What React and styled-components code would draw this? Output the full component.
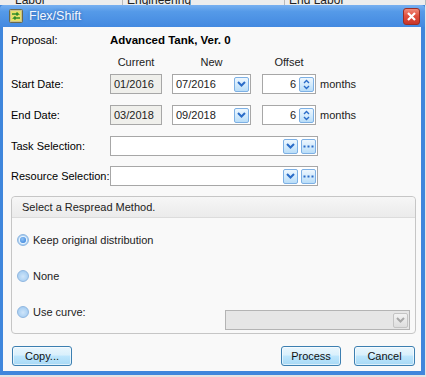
import React from 'react'
import styled, { createGlobalStyle } from 'styled-components'

const GlobalStyle = createGlobalStyle`
html, body {
  margin: 0;
  padding: 0;
}
body {
  width: 426px;
  height: 377px;
  overflow: hidden;
  background: #e4e4e4;
  font-family: "Liberation Sans", Arial, sans-serif;
  font-size: 11px;
  color: #000;
}
`

const Sheet = styled.div`
display: flex;
height: 5px;
overflow: hidden;
background: #ededed;
`

const SheetCell = styled.div`
width: ${p => p.$w}px;
padding-left: ${p => p.$pad}px;
box-sizing: border-box;
border-right: 1px solid #b9b9b9;
font-size: 12px;
line-height: 0px;
color: #222;
white-space: nowrap;
overflow: hidden;
`

const Window = styled.div`
width: 425px;
box-sizing: border-box;
background: #3f86dc;
padding: 0 4px 4px 3px;
display: flex;
flex-direction: column;
`

const TitleBar = styled.div`
height: 22px;
margin: 0 -4px 0 -3px;
padding: 0 5px 0 9px;
display: flex;
align-items: center;
gap: 6px;
background: linear-gradient(#78b0f0 0%, #559ae8 30%, #4389e0 100%);
border-radius: 4px 4px 0 0;
`

const TitleText = styled.div`
flex: 1;
color: #f4f8ff;
font-size: 12.5px;
text-shadow: 0 0 3px rgba(20, 60, 130, 0.6);
`

const CloseButton = styled.div`
width: 15px;
height: 15px;
border: 1px solid #9b2e25;
border-radius: 3px;
background: linear-gradient(#f08a7a 0%, #e1513f 45%, #c8352a 100%);
display: flex;
align-items: center;
justify-content: center;
`

const Body = styled.div`
height: 344px;
box-sizing: border-box;
background: #f9f9f9;
padding: 3px 5px 0 8px;
display: flex;
flex-direction: column;
`

const Row = styled.div`
display: flex;
align-items: center;
height: 20px;
margin-top: ${p => p.$top || 0}px;
`

const Label = styled.div`
width: 99px;
flex-shrink: 0;
white-space: nowrap;
`

const Bold = styled.div`
font-weight: bold;
font-size: 11.5px;
`

const Head = styled.div`
width: ${p => p.$w}px;
margin-right: ${p => p.$mr || 0}px;
text-align: center;
color: #222;
`

const Field = styled.div`
width: ${p => p.$w}px;
height: 20px;
box-sizing: border-box;
margin-right: ${p => p.$mr || 0}px;
border: 1px solid ${p => (p.$disabled ? '#b4b4b4' : '#a7a7a7')};
background: ${p => (p.$readonly ? '#efefeb' : p.$disabled ? '#e6e6e6' : '#fff')};
display: flex;
align-items: center;
gap: 3px;
padding: 0 1px 0 3px;
color: #222;
font-size: 11px;
`

const FieldText = styled.div`
flex: 1;
text-align: ${p => p.$align || 'left'};
padding-right: ${p => p.$pr || 0}px;
`

const MiniButton = styled.div`
width: 15px;
height: 15px;
box-sizing: border-box;
border: 1px solid ${p => (p.$disabled ? '#c4c4c4' : '#7db0e4')};
border-radius: 2px;
background: ${p =>
  p.$disabled
    ? 'linear-gradient(#f2f2f2, #dedede)'
    : 'linear-gradient(#eef7fe 0%, #d4ebfc 50%, #b9ddf8 100%)'};
display: flex;
align-items: center;
justify-content: center;
`

const Units = styled.div`
margin-left: 4px;
color: #222;
`

const Group = styled.div`
margin-top: 10px;
height: 138px;
box-sizing: border-box;
border: 1px solid #c6c6c6;
border-radius: 4px;
display: flex;
flex-direction: column;
`

const GroupHead = styled.div`
height: 20px;
flex-shrink: 0;
padding-left: 10px;
display: flex;
align-items: center;
background: linear-gradient(#f6f6f6, #ebebeb);
border-bottom: 1px solid #dcdcdc;
border-radius: 4px 4px 0 0;
color: #222;
`

const GroupBody = styled.div`
padding: 12px 5px 0 5px;
display: flex;
flex-direction: column;
gap: 16px;
`

const RadioRow = styled.div`
display: flex;
align-items: flex-start;
`

const RadioLabel = styled.div`
height: 20px;
display: flex;
align-items: center;
gap: 4px;
color: #222;
`

const Radio = styled.span`
width: 12px;
height: 12px;
box-sizing: border-box;
border-radius: 50%;
border: 1px solid #8fb6e0;
background: radial-gradient(circle at 50% 55%, #cfe5fa 0%, #a9cff2 70%, #9cc6ee 100%);
display: flex;
align-items: center;
justify-content: center;

&::after {
  content: '';
  display: ${p => (p.$checked ? 'block' : 'none')};
  width: 6px;
  height: 6px;
  border-radius: 50%;
  background: radial-gradient(circle at 40% 35%, #8fc2f5, #2f7bd8);
  box-shadow: 0 0 0 1px #eaf4fd;
}
`

const CurveField = styled(Field)`
margin-left: auto;
margin-top: 8px;
`

const ButtonBar = styled.div`
display: flex;
margin-top: 12px;
padding: 0 1px;
gap: 13px;
`

const Button = styled.button`
width: ${p => p.$w || 60}px;
height: 20px;
margin-right: ${p => (p.$push ? 'auto' : '0')};
border: 1px solid #3c7fb1;
border-radius: 3px;
background: linear-gradient(#eaf6fd 0%, #d9f0fc 45%, #bee6fd 50%, #a7d9f5 100%);
box-shadow: inset 0 0 0 1px rgba(255, 255, 255, 0.6);
font-family: "Liberation Sans", Arial, sans-serif;
font-size: 11px;
color: #111;
padding: 0;
`

const Chevron = ({ color = '#2a6cc8' }) => (
  <svg width="9" height="6" viewBox="0 0 9 6">
    <path d="M1 1 L4.5 4.5 L8 1" fill="none" stroke={color} strokeWidth="2" />
  </svg>
)

const Dots = () => (
  <svg width="11" height="3" viewBox="0 0 11 3">
    <rect x="0.5" y="0.5" width="2" height="2" fill="#2a6cc8" />
    <rect x="4.5" y="0.5" width="2" height="2" fill="#2a6cc8" />
    <rect x="8.5" y="0.5" width="2" height="2" fill="#2a6cc8" />
  </svg>
)

const UpDown = () => (
  <svg width="7" height="11" viewBox="0 0 7 11">
    <path d="M1 4 L3.5 1.5 L6 4" fill="none" stroke="#2a6cc8" strokeWidth="1.4" />
    <path d="M1 7 L3.5 9.5 L6 7" fill="none" stroke="#2a6cc8" strokeWidth="1.4" />
  </svg>
)

const AppIcon = () => (
  <svg width="14" height="14" viewBox="0 0 14 14">
    <rect x="0.5" y="0.5" width="13" height="13" rx="1" fill="#c9c08a" stroke="#6b6a4a" />
    <rect x="2" y="2" width="10" height="10" fill="#e8e06a" />
    <path d="M3 5 H9 L7.5 3.5 M9 5 L7.5 6.5" fill="none" stroke="#2f8a2a" strokeWidth="1.6" />
    <path d="M11 9 H5 L6.5 7.5 M5 9 L6.5 10.5" fill="none" stroke="#2f8a2a" strokeWidth="1.6" />
  </svg>
)

const CloseX = () => (
  <svg width="9" height="9" viewBox="0 0 9 9">
    <path d="M1 1 L8 8 M8 1 L1 8" stroke="#fff" strokeWidth="2.2" />
  </svg>
)

const DateRow = ({ label, current, next, top }) => (
  <Row $top={top}>
    <Label>{label}</Label>
    <Field $w={52} $mr={10} $readonly>
      <FieldText>{current}</FieldText>
    </Field>
    <Field $w={79} $mr={11}>
      <FieldText>{next}</FieldText>
      <MiniButton><Chevron /></MiniButton>
    </Field>
    <Field $w={54}>
      <FieldText $align="right">6</FieldText>
      <MiniButton><UpDown /></MiniButton>
    </Field>
    <Units>months</Units>
  </Row>
)

const PickRow = ({ label, top }) => (
  <Row $top={top}>
    <Label>{label}</Label>
    <Field $w={208}>
      <FieldText />
      <MiniButton><Chevron /></MiniButton>
      <MiniButton><Dots /></MiniButton>
    </Field>
  </Row>
)

export default function App() {
  return (
    <>
      <GlobalStyle />
      <Sheet>
        <SheetCell $w={123} $pad={15}>Labor</SheetCell>
        <SheetCell $w={162} $pad={4}>Engineering</SheetCell>
        <SheetCell $w={141} $pad={4}>End Labor</SheetCell>
      </Sheet>
      <Window>
        <TitleBar>
          <AppIcon />
          <TitleText>Flex/Shift</TitleText>
          <CloseButton><CloseX /></CloseButton>
        </TitleBar>
        <Body>
          <Row>
            <Label>Proposal:</Label>
            <Bold>Advanced Tank, Ver. 0</Bold>
          </Row>
          <Row $top={2}>
            <Label />
            <Head $w={52} $mr={10}>Current</Head>
            <Head $w={79} $mr={11}>New</Head>
            <Head $w={54}>Offset</Head>
          </Row>
          <DateRow label="Start Date:" current="01/2016" next="07/2016" top={2} />
          <DateRow label="End Date:" current="03/2018" next="09/2018" top={11} />
          <PickRow label="Task Selection:" top={11} />
          <PickRow label="Resource Selection:" top={10} />
          <Group>
            <GroupHead>Select a Respread Method.</GroupHead>
            <GroupBody>
              <RadioRow>
                <RadioLabel><Radio $checked />Keep original distribution</RadioLabel>
              </RadioRow>
              <RadioRow>
                <RadioLabel><Radio />None</RadioLabel>
              </RadioRow>
              <RadioRow>
                <RadioLabel><Radio />Use curve:</RadioLabel>
                <CurveField $w={185} $disabled>
                  <FieldText />
                  <MiniButton $disabled><Chevron color="#a8a8a8" /></MiniButton>
                </CurveField>
              </RadioRow>
            </GroupBody>
          </Group>
          <ButtonBar>
            <Button $push>Copy...</Button>
            <Button>Process</Button>
            <Button $w={61}>Cancel</Button>
          </ButtonBar>
        </Body>
      </Window>
    </>
  )
}
